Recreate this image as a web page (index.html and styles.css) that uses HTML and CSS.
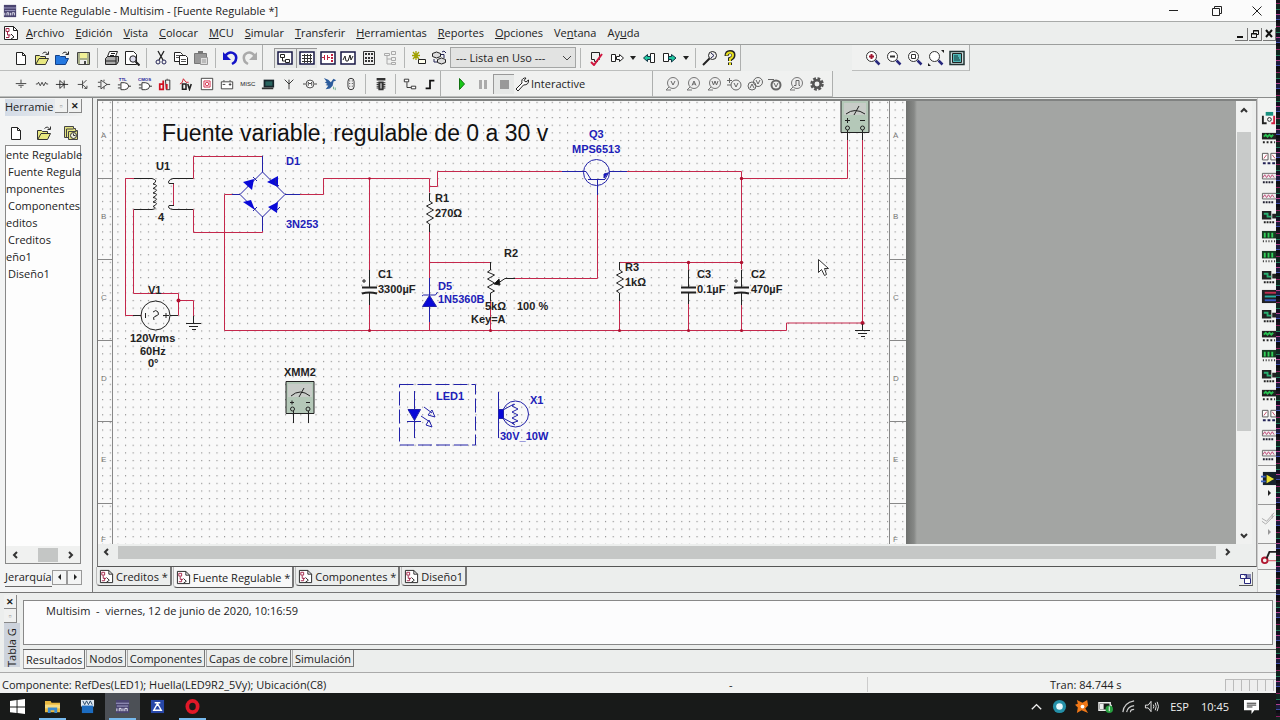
FILE: index.html
```html
<!DOCTYPE html>
<html lang="es">
<head>
    <meta charset="UTF-8">
    <meta name="viewport" content="width=device-width, initial-scale=1.0">
    <title>Fuente Regulable - Multisim</title>
    <link rel="stylesheet" href="styles.css">
</head>
<body>
    <!-- icon sprites -->
    <svg class="sprites" aria-hidden="true">
        <symbol id="app" viewBox="0 0 16 16"><path fill="#4a4470" d="M1 1h14v14H1z"/><path stroke="#a9a6cc" fill="none" d="M1 4.500h14M2 7.500h12"/><path stroke="#efeffa" fill="none" d="M2 13v-3M4.500 13v-3h2v3M8.500 13v-3M10.500 13v-3h2.500v3"/></symbol>
        <symbol id="doc" viewBox="0 0 16 16"><path fill="#fff" stroke="#222" d="M1.500 1.500h9l4 4v9h-13z"/><path fill="none" stroke="#222" d="M10.500 1.500v4h4"/><path fill="none" stroke="#a3264a" d="M3 3.500h3v3H3zM4.500 7v3h3M3 12.500h3v-3"/><path fill="none" stroke="#222" d="M8 9l3 3-3 2"/></symbol>
        <symbol id="new" viewBox="0 0 16 16"><path fill="#fff" stroke="#222" d="M3.500 2.500h6l3 3v9h-9z"/><path fill="none" stroke="#222" d="M9.500 2.500v3h3"/></symbol>
        <symbol id="open" viewBox="0 0 16 16"><path fill="#e8e880" stroke="#333" d="M1.500 14.500v-9h4l1 1h5v2h3l-3 6z"/><path fill="none" stroke="#333" d="M2 14l3-5.500h9M8.500 3.500q3-3 5 .5M14.500 1.500v3h-3"/></symbol>
        <symbol id="openblue" viewBox="0 0 16 16"><path fill="#2478e0" stroke="#123f86" d="M1.500 14.500v-9h4l1 1h5v2h3l-3 6z"/><path fill="none" stroke="#222" d="M8.500 3.500q3-3 5 .5M14.500 1.500v3h-3"/></symbol>
        <symbol id="save" viewBox="0 0 16 16"><path fill="#a9b08a" stroke="#444" d="M2.500 2.500h12v12h-11l-1-1z"/><path fill="#f0f096" d="M5 3h7v5H5z"/><path fill="#eee" d="M5 10h7v4H5z"/><path fill="#444" d="M9 11h2v3H9z"/></symbol>
        <symbol id="print" viewBox="0 0 16 16"><path fill="#fff" stroke="#222" d="M5.500 1.500h8l-2 5h-8z"/><path fill="#aaa" stroke="#222" d="M1.500 8.500l2-2h11v5l-2 3h-11z"/><path stroke="#222" fill="none" d="M1 11h11M7 3.500h4M6 5.500h4M12 7v7"/></symbol>
        <symbol id="preview" viewBox="0 0 16 16"><path fill="#fff" stroke="#222" d="M1.500 1.500h8l3 3v10h-11z"/><circle cx="9" cy="9" r="3.200" fill="#dde" stroke="#222"/><path stroke="#222" stroke-width="2" d="M11.500 11.500l4 4"/></symbol>
        <symbol id="cut" viewBox="0 0 16 16"><path stroke="#222" stroke-width="1.300" fill="none" d="M5 1l5 9M11 1l-5 9"/><circle cx="5" cy="12" r="2" fill="none" stroke="#225"/><circle cx="11" cy="12" r="2" fill="none" stroke="#225"/></symbol>
        <symbol id="copy" viewBox="0 0 16 16"><path fill="#fff" stroke="#222" d="M1.500 2.500h6l2 2v7h-8z"/><path fill="#fff" stroke="#222" d="M6.500 5.500h6l2 2v7h-8z"/><path stroke="#555" d="M3 5.500h4M3 7.500h3M8 9.500h5M8 11.500h5"/></symbol>
        <symbol id="paste" viewBox="0 0 16 16"><path fill="#999" stroke="#777" d="M1.500 3.500h12v10h-12z"/><path fill="#777" d="M5 1h5v3H5z"/><path fill="#ddd" stroke="#999" d="M7.500 7.500h7v7h-7z"/><path stroke="#999" d="M9 10h4M9 12h4"/></symbol>
        <symbol id="undo" viewBox="0 0 16 16"><path fill="none" stroke="#1414c8" stroke-width="2.500" d="M3 6q4-5 8-3t3 6q0 3-4 5"/><path fill="#1414c8" d="M1 2v8h8z"/></symbol>
        <symbol id="redo" viewBox="0 0 16 16"><path fill="none" stroke="#aaa" stroke-width="2.500" d="M13 6q-4-5-8-3t-3 6q0 3 4 5"/><path fill="#aaa" d="M15 2v8H7z"/></symbol>
        <symbol id="hier" viewBox="0 0 16 16"><path fill="#fff" stroke="#171746" stroke-width="1.500" d="M1 2h14v12H1z"/><path fill="#fff" stroke="#222" d="M3.500 4.500h4v3h-4zM8.500 9.500h4v3h-4zM5.500 8v3H8"/></symbol>
        <symbol id="grid" viewBox="0 0 16 16"><path fill="#fff" stroke="#171746" stroke-width="1.500" d="M1 2h14v12H1z"/><path stroke="#333" fill="none" d="M3 5.500h10M3 8.500h10M3 11.500h10M5.500 4v9M8.500 4v9M11.500 4v9"/></symbol>
        <symbol id="cap" viewBox="0 0 16 16"><path fill="#fff" stroke="#171746" stroke-width="1.500" d="M1 2h14v12H1z"/><path stroke="#c02040" fill="none" d="M2 7.500h2M4.500 5v5M7.500 5v5M8 7.500h2"/><path stroke="#c02040" stroke-dasharray="2 1" stroke-width="2" d="M12 4v9"/></symbol>
        <symbol id="graph" viewBox="0 0 16 16"><path fill="#fff" stroke="#171746" stroke-width="1.500" d="M1 2h14v12H1z"/><path stroke="#222" fill="none" d="M3 10l2-4 1 5h2l2-6 1 5 2-4"/></symbol>
        <symbol id="calc" viewBox="0 0 16 16"><path fill="#eee" stroke="#333" d="M2.500 1.500h11v13h-11z"/><path stroke="#333" stroke-width="2" stroke-dasharray="2 1" d="M4 4h9M4 8h9M4 11h9"/></symbol>
        <symbol id="tree" viewBox="0 0 16 16"><path fill="none" stroke="#aaa" d="M2.500 3.500h5v2h-5zM9.500 1.500h4v3h-4zM5 6v8h4M5 9h4M9.500 7.500h4v3h-4zM9.500 12.500h4v2h-4z"/></symbol>
        <symbol id="spark" viewBox="0 0 16 16"><path stroke="#a0a000" stroke-width="1.300" d="M5 1v9M1 5.500h8M2 2l6 7M8 2L2 9"/><path fill="#ffe" stroke="#222" d="M7.500 9.500h7v4h-7z"/></symbol>
        <symbol id="db" viewBox="0 0 16 16"><path fill="#ddd" stroke="#222" d="M1.500 3.500q4-3 8 0v3q-4 3-8 0zM6.500 9.500q4-3 8 0v3q-4 3-8 0z"/><path fill="none" stroke="#225" d="M3 9v3h3M10 4.500h3V8M11 2l2-1 2 2"/></symbol>
        <symbol id="erc" viewBox="0 0 16 16"><path fill="none" stroke="#222" d="M3.500 2.500h8v7h-2v2h-3v-2h-3z"/><path fill="none" stroke="#d01840" stroke-width="2" d="M3 12l3 3 8-11"/></symbol>
        <symbol id="fwd" viewBox="0 0 16 16"><path fill="#fff" stroke="#222" d="M2.500 4.500h4v7h-4z"/><path fill="#fff" stroke="#222" d="M7.500 6.500h3v-2l4 3.500-4 3.500v-2h-3z"/></symbol>
        <symbol id="back" viewBox="0 0 16 16"><path fill="#fff" stroke="#222" d="M9.500 3.500h4v9h-4z"/><path fill="#20c8a0" stroke="#134" d="M9.500 6.500h-3v-2L2.500 8l4 3.500v-2h3z"/></symbol>
        <symbol id="fwdg" viewBox="0 0 16 16"><path fill="#fff" stroke="#222" d="M1.500 3.500h5v8h-5z"/><path fill="#20c8a0" stroke="#134" d="M6.500 6.500h3v-2L14 8l-4.500 4v-2.500h-3z"/></symbol>
        <symbol id="find" viewBox="0 0 16 16"><circle cx="10.500" cy="5.500" r="4" fill="#eee" stroke="#222"/><path stroke="#222" stroke-width="2" d="M7.500 8.500L1 15"/><path fill="none" stroke="#225" d="M9 3l3 2.500L9 8"/></symbol>
        <symbol id="help" viewBox="0 0 16 16"><path fill="none" stroke="#222" stroke-width="4" d="M4.500 6q0-4 3.500-4t3.500 3T8 9v2M8 12.500v2.500"/><path fill="none" stroke="#e8e020" stroke-width="2" d="M4.500 5.500Q5 2.500 8 2.500T11 5 8 9v2M8 12.500V15"/></symbol>
        <symbol id="lens" viewBox="0 0 16 16"><circle cx="6.500" cy="6.500" r="5" fill="#fff" stroke="#333"/><path stroke="#28287c" stroke-width="2.500" d="M10.500 10.500l4 4"/></symbol>
        <symbol id="full" viewBox="0 0 16 16"><path fill="#cdd" stroke="#233" stroke-width="1.500" d="M1 1.500h14v13H1z"/><path fill="#50b8b8" stroke="#222" d="M3.500 3.500h9v9h-9z"/><path stroke="#133" d="M5 6h4M5 8h5M5 10h6"/></symbol>

        <symbol id="src" viewBox="0 0 16 16"><path stroke="#333" fill="none" d="M8 3v4M2 7.500h12M5 9.500h6M7 11.500h2"/></symbol>
        <symbol id="res" viewBox="0 0 16 16"><path stroke="#333" fill="none" d="M1 8h2l1-2 2 4 2-4 2 4 2-4 1 2h2"/></symbol>
        <symbol id="dio" viewBox="0 0 16 16"><path stroke="#222" fill="none" d="M1 8.500h14M5.500 4v9l5-4.500zM10.500 4v9"/></symbol>
        <symbol id="trn" viewBox="0 0 16 16"><path stroke="#333" fill="none" d="M2 8.500h5M7.500 4v9M12 3.500L8 7.500M8 9l4 4M9.500 13h3v-3"/></symbol>
        <symbol id="amp" viewBox="0 0 16 16"><path stroke="#333" fill="none" d="M4.500 3.500v10l7-5zM1 6h3M1 11h3M11 8.500h4M8 3v2M8 11v3"/></symbol>
        <symbol id="gate" viewBox="0 0 16 16"><path stroke="#222" fill="#fff" d="M4.500 6.500h4q4 0 5 4-1 4-5 4h-4zM1 9h3M1 12.500h3M13 10.500h3"/></symbol>
        <symbol id="dig" viewBox="0 0 16 16"><path stroke="#222" fill="none" d="M8.500 3.500h5v11h-4zM10.500 2v1"/><path stroke="#d01020" stroke-width="2" fill="none" d="M2 8h4v6H2zM6 4v5M10 8v6"/></symbol>
        <symbol id="mix" viewBox="0 0 16 16"><path stroke="#d01020" fill="none" d="M1 8q3 0 4-6l3 4h3"/><path stroke="#222" stroke-width="1.800" fill="none" d="M4 8h4v6H4zM10 8l2 6 2-6"/></symbol>
        <symbol id="ind" viewBox="0 0 16 16"><path stroke="#333" fill="#fff" d="M1.500 1.500h13v13h-13z"/><path stroke="#d02040" fill="none" d="M4.500 4.500h7v7h-7z"/><circle cx="8" cy="8" r="2" fill="none" stroke="#d02040"/></symbol>
        <symbol id="pwr" viewBox="0 0 16 16"><path stroke="#333" fill="#fff" d="M1.500 5.500h13v8h-13zM4.500 5V3.500M11.500 5V3.500"/><path stroke="#333" d="M3 8.500h3M10 8.500h3M11.500 7v3"/></symbol>
        <symbol id="per" viewBox="0 0 16 16"><path fill="#17252b" d="M3 3h12v9H3z"/><path fill="#29645f" d="M5 5h8v5H5z"/><path fill="#333" d="M1 12h13v2H1z"/></symbol>
        <symbol id="ant" viewBox="0 0 16 16"><path stroke="#222" fill="none" d="M3 3l5 5 5-5M8 3v11"/></symbol>
        <symbol id="mot" viewBox="0 0 16 16"><circle cx="8" cy="8" r="4.500" fill="#fff" stroke="#333"/><path stroke="#333" fill="none" d="M0 8h3M13 8h3M6 10V6l2 2 2-2v4"/></symbol>
        <symbol id="bird" viewBox="0 0 16 16"><path fill="#2c5c9c" d="M1 1l5 2 3 3 3-4 2 1 1 1-3 1-1 5-3 3-5 1 3-4-3-1 2-1-3-2 2-1z"/><path stroke="#6a8" d="M12 11v3M14 12v3"/></symbol>
        <symbol id="con" viewBox="0 0 16 16"><rect x="4.500" y="1.500" width="7" height="13" rx="3.500" fill="#eee" stroke="#222"/><path stroke="#222" stroke-dasharray="1 2" d="M6.500 4v9M9.500 4v9"/></symbol>
        <symbol id="mcu" viewBox="0 0 16 16"><path fill="#333" d="M3 1h10v3H3zM5 5h6v10H5z"/><path stroke="#333" stroke-dasharray="1 1" stroke-width="10" d="M8 6v8"/><path fill="#aaa" d="M7 7h2v6H7z"/></symbol>
        <symbol id="blk" viewBox="0 0 16 16"><path fill="#fff" stroke="#222" d="M1.500 2.500h5v3h-5zM9.500 10.500h5v3h-5z"/><path fill="none" stroke="#222" d="M4.500 6v6H9"/></symbol>
        <symbol id="bus" viewBox="0 0 16 16"><path fill="none" stroke="#111" stroke-width="2" d="M3 13h5V4h5"/></symbol>
        <symbol id="wrench" viewBox="0 0 16 16"><path fill="#fff" stroke="#222" d="M2 13l6-6Q7 3 10.500 2H12L10 4.500l2 1.500 2.500-2q.5 5-5 5L4 15z"/></symbol>
        <symbol id="probe" viewBox="0 0 16 16"><circle cx="9" cy="7" r="5.500" fill="#eee" stroke="#777"/><path fill="none" stroke="#777" d="M5 11l-3 3h5"/></symbol>
        <symbol id="gear" viewBox="0 0 16 16"><circle cx="8" cy="8" r="5" fill="none" stroke="#555" stroke-width="3.500" stroke-dasharray="2.500 1.400"/><circle cx="8" cy="8" r="3.700" fill="none" stroke="#555" stroke-width="2.500"/></symbol>
        <symbol id="recent" viewBox="0 0 16 16"><path fill="#e4e480" stroke="#444" d="M1.500 12.500v-11h9v2h2v2h2v9h-9v-2z"/><path fill="none" stroke="#444" d="M3.500 12v-8h7M5.500 14V6.500h8"/><circle cx="10.500" cy="10.500" r="3" fill="#eed" stroke="#333"/><path stroke="#333" fill="none" d="M10.500 8.500v2h2"/></symbol>

        <!-- instruments -->
        <symbol id="mm" viewBox="0 0 16 16"><path fill="#1a9080" d="M5 1h8v4H5z"/><path fill="none" stroke="#222" stroke-width="2" d="M2 5v8h4"/><path fill="none" stroke="#d02040" stroke-width="2" d="M14 5v8h-3"/><circle cx="9" cy="9" r="2" fill="none" stroke="#222"/></symbol>
        <symbol id="scope" viewBox="0 0 16 16"><path fill="#222" d="M1 2h15v7H1z"/><path fill="none" stroke="#28c050" stroke-width="2" d="M3 6l2-2 2 2 2-2 2 2 2-2"/><path stroke="#222" stroke-width="2" stroke-dasharray="2 2" d="M2 12h13"/></symbol>
        <symbol id="digits" viewBox="0 0 16 16"><path fill="#173a22" d="M1 1h15v8H1z"/><path stroke="#30d058" stroke-width="2" d="M4 3v5M8 3v5M12 3v5"/><path stroke="#222" stroke-width="2" stroke-dasharray="1 2" d="M2 12h13"/></symbol>
        <symbol id="half" viewBox="0 0 16 16"><path fill="#222" d="M1 1h10v9H1zM12 4h4v5h-4z"/><path fill="none" stroke="#28b070" stroke-width="2" d="M3 4h4v3h4"/><path stroke="#222" stroke-width="2" stroke-dasharray="2 1" d="M3 13h12"/></symbol>
        <symbol id="gen" viewBox="0 0 16 16"><path fill="#fff" stroke="#555" d="M1.500 2.500h6v7h-6zM10.500 2.500h6v7h-6z"/><path stroke="#c04860" fill="none" d="M3 8l3-4M12 4l3 4"/><path stroke="#225" stroke-width="2" stroke-dasharray="3 2" d="M2 13h13"/></symbol>
        <symbol id="wave" viewBox="0 0 16 16"><path fill="#eee" stroke="#666" d="M1.500 2.500h15v6h-15z"/><path fill="none" stroke="#c04878" d="M2 7l2-3 2 3 2-3 2 3 2-3 2 3"/><path stroke="#223" stroke-width="2" stroke-dasharray="2 1" d="M2 12h11"/></symbol>
        <symbol id="logic" viewBox="0 0 16 16"><path fill="#222" d="M1 1h15v14H1z"/><path stroke="#c03050" stroke-width="2" d="M4 4h12"/><path stroke="#28b0a0" stroke-width="2" d="M4 8h12"/><path stroke="#3858c0" stroke-width="2" d="M4 12h12"/></symbol>
        <symbol id="lv" viewBox="0 0 16 16"><path fill="#17222b" d="M2 1h14v14H2z"/><path fill="#e8e030" d="M6 4v9l8-4.500z"/><path stroke="#3a62c0" stroke-width="2" d="M0 6h5M0 11h5"/></symbol>
        <symbol id="elvis" viewBox="0 0 16 16"><path fill="none" stroke="#aaa" d="M1 12l4 3 9-9M1 9l5 3 8-9M12 4v5"/></symbol>
        <symbol id="clamp" viewBox="0 0 16 16"><circle cx="4" cy="12" r="3" fill="none" stroke="#b01830" stroke-width="2"/><path stroke="#222" stroke-width="2" fill="none" d="M6 10l3-7h7"/><path stroke="#d04050" d="M7 12.500h9"/></symbol>
    </svg>

    <div class="desktop">
        <header class="titlebar">
            <svg class="icon-sm"><use href="#app"/></svg>
            <span class="title">Fuente Regulable - Multisim - [Fuente Regulable *]</span>
            <div class="window-buttons">
                <button aria-label="Minimizar"><svg viewBox="0 0 10 10"><path d="M0 4.500h9"/></svg></button>
                <button aria-label="Restaurar"><svg viewBox="0 0 10 10"><path d="M.5 2.500h7v7h-7zM2.500 2V.5h7v7H8"/></svg></button>
                <button aria-label="Cerrar"><svg viewBox="0 0 10 10"><path d="M.5.5l9 9M9.500.5l-9 9"/></svg></button>
            </div>
        </header>

        <nav class="menubar">
            <svg class="menu-doc"><use href="#doc"/></svg>
            <a href="#"><u>A</u>rchivo</a>
            <a href="#"><u>E</u>dición</a>
            <a href="#"><u>V</u>ista</a>
            <a href="#"><u>C</u>olocar</a>
            <a href="#"><u>M</u>CU</a>
            <a href="#"><u>S</u>imular</a>
            <a href="#"><u>T</u>ransferir</a>
            <a href="#"><u>H</u>erramientas</a>
            <a href="#"><u>R</u>eportes</a>
            <a href="#"><u>O</u>pciones</a>
            <a href="#">Ve<u>n</u>tana</a>
            <a href="#">Ay<u>u</u>da</a>
            <div class="mdi-buttons">
                <button aria-label="Minimizar documento"><svg viewBox="0 0 10 10"><path d="M1 8h6"/></svg></button>
                <button aria-label="Restaurar documento"><svg viewBox="0 0 10 10"><path class="thin" d="M1.500 4.500h5v4h-5zM3.500 4V1.500h5v4H7M1 5h6M3 2h6"/></svg></button>
                <button aria-label="Cerrar documento"><svg viewBox="0 0 10 10"><path d="M2 1l6 7M8 1L2 8"/></svg></button>
            </div>
        </nav>

        <div class="toolbar-row">
            <div class="toolbar standard">
                <div class="group g4">
                    <button title="Nuevo"><svg><use href="#new"/></svg></button>
                    <button title="Abrir"><svg><use href="#open"/></svg></button>
                    <button title="Abrir muestras"><svg><use href="#openblue"/></svg></button>
                    <button title="Guardar"><svg><use href="#save"/></svg></button>
                </div>
                <div class="group g2">
                    <button title="Imprimir"><svg><use href="#print"/></svg></button>
                    <button title="Vista previa"><svg><use href="#preview"/></svg></button>
                </div>
                <div class="group g3">
                    <button title="Cortar"><svg><use href="#cut"/></svg></button>
                    <button title="Copiar"><svg><use href="#copy"/></svg></button>
                    <button title="Pegar"><svg><use href="#paste"/></svg></button>
                </div>
                <div class="group g2">
                    <button title="Deshacer"><svg><use href="#undo"/></svg></button>
                    <button title="Rehacer"><svg><use href="#redo"/></svg></button>
                </div>
            </div>
            <div class="toolbar">
                <div class="group g6">
                    <button class="on" title="Jerarquía"><svg><use href="#hier"/></svg></button>
                    <button class="on" title="Hoja"><svg><use href="#grid"/></svg></button>
                    <button title="Netlist"><svg><use href="#cap"/></svg></button>
                    <button title="Gráficos"><svg><use href="#graph"/></svg></button>
                    <button title="Postprocesador"><svg><use href="#calc"/></svg></button>
                    <button title="Padre"><svg><use href="#tree"/></svg></button>
                </div>
                <div class="group in-use">
                    <button title="Asistente"><svg><use href="#spark"/></svg></button>
                    <button title="Base de datos"><svg><use href="#db"/></svg></button>
                    <div class="combo">
                        <select aria-label="Lista en Uso"><option>--- Lista en Uso ---</option></select>
                        <svg viewBox="0 0 10 10"><path d="M1 3l4 4 4-4"/></svg>
                    </div>
                </div>
                <div class="group transfer">
                    <button title="ERC"><svg><use href="#erc"/></svg></button>
                    <button title="Transferir"><svg><use href="#fwd"/></svg></button>
                    <button class="drop" title="Más"><svg viewBox="0 0 10 10"><path d="M2 3h6L5 7z"/></svg></button>
                    <button title="Anotar atrás"><svg><use href="#back"/></svg></button>
                    <button title="Anotar"><svg><use href="#fwdg"/></svg></button>
                    <button class="drop" title="Más"><svg viewBox="0 0 10 10"><path d="M2 3h6L5 7z"/></svg></button>
                </div>
                <div class="group g2">
                    <button title="Buscar"><svg><use href="#find"/></svg></button>
                    <button title="Ayuda"><svg><use href="#help"/></svg></button>
                </div>
            </div>
            <div class="toolbar zoom-bar">
                <div class="group g5">
                    <button title="Acercar"><svg viewBox="0 0 16 16"><use href="#lens"/><path stroke="#a01830" stroke-width="2" d="M6.500 4v5M4 6.500h5"/></svg></button>
                    <button title="Alejar"><svg viewBox="0 0 16 16"><use href="#lens"/><path stroke="#333" stroke-width="2" d="M4 6.500h5"/></svg></button>
                    <button title="Zoom área"><svg viewBox="0 0 16 16"><use href="#lens"/><path stroke="#333" fill="none" d="M4.500 4.500h4v4h-4z"/></svg></button>
                    <button title="Ajustar"><svg viewBox="0 0 16 16"><use href="#lens"/><path fill="#222" d="M13 0h3v3zM0 13v3h3z"/></svg></button>
                    <button title="Pantalla completa"><svg><use href="#full"/></svg></button>
                </div>
            </div>
        </div>

        <div class="toolbar-row">
            <div class="toolbar second">
                <div class="group g17">
                    <button title="Fuentes"><svg><use href="#src"/></svg></button>
                    <button title="Básicos"><svg><use href="#res"/></svg></button>
                    <button title="Diodos"><svg><use href="#dio"/></svg></button>
                    <button title="Transistores"><svg><use href="#trn"/></svg></button>
                    <button title="Analógicos"><svg><use href="#amp"/></svg></button>
                    <button title="TTL"><svg viewBox="0 0 16 16"><use href="#gate"/><text class="chip" x="2" y="5">TTL</text></svg></button>
                    <button title="CMOS"><svg viewBox="0 0 16 16"><use href="#gate"/><text class="chip" x="0" y="5">CMOS</text></svg></button>
                    <button title="Digitales"><svg><use href="#dig"/></svg></button>
                    <button title="Mixtos"><svg><use href="#mix"/></svg></button>
                    <button title="Indicadores"><svg><use href="#ind"/></svg></button>
                    <button title="Potencia"><svg><use href="#pwr"/></svg></button>
                    <button class="misc" title="Miscelánea">MISC</button>
                    <button title="Periféricos"><svg><use href="#per"/></svg></button>
                    <button title="RF"><svg><use href="#ant"/></svg></button>
                    <button title="Electromecánicos"><svg><use href="#mot"/></svg></button>
                    <button title="NI"><svg><use href="#bird"/></svg></button>
                    <button title="Conectores"><svg><use href="#con"/></svg></button>
                </div>
                <div class="group g1">
                    <button title="MCU"><svg><use href="#mcu"/></svg></button>
                </div>
                <div class="group g2">
                    <button title="Bloque"><svg><use href="#blk"/></svg></button>
                    <button title="Bus"><svg><use href="#bus"/></svg></button>
                </div>
            </div>
            <div class="toolbar simulate">
                <button title="Ejecutar"><svg viewBox="0 0 16 16"><path fill="#18c818" stroke="#107010" d="M5.500 2.500v11l5-5.500z"/></svg></button>
                <button title="Pausa"><svg viewBox="0 0 16 16"><path fill="#aaa" d="M4 4h3v9H4zM9 4h3v9H9z"/></svg></button>
                <button class="on" title="Detener"><svg viewBox="0 0 16 16"><path fill="#999" d="M4 4h9v9H4z"/></svg></button>
                <button class="interactive"><svg><use href="#wrench"/></svg>Interactive</button>
            </div>
            <div class="toolbar probes">
                <div class="group g8">
                    <button title="Voltaje"><svg viewBox="0 0 16 16"><use href="#probe"/><path class="mark" d="M7 5l2 4 2-4"/></svg></button>
                    <button title="Corriente"><svg viewBox="0 0 16 16"><use href="#probe"/><path class="mark" d="M7 9.500L9 5l2 4.500M8 8h2"/></svg></button>
                    <button title="Potencia"><svg viewBox="0 0 16 16"><use href="#probe"/><path class="mark" d="M6 5l1.500 4L9 5l1.500 4L12 5"/></svg></button>
                    <button title="Diferencial"><svg viewBox="0 0 16 16"><circle class="mark" cx="10" cy="9" r="5"/><path class="mark" d="M8 7l2 4 2-4M1 4.500h5M3.500 2v5M1 9h4"/></svg></button>
                    <button title="Voltaje y corriente"><svg viewBox="0 0 16 16"><circle class="mark" cx="5" cy="10" r="4"/><circle class="mark" cx="11" cy="6" r="4.500"/><path class="mark" d="M9 4l2 4 2-4M3 12l2-4 2 4"/></svg></button>
                    <button title="Referencia"><svg viewBox="0 0 16 16"><path class="mark" d="M1 3.500h6"/><circle class="mark heavy" cx="9" cy="9" r="4.500"/><path class="mark" d="M7 7l2 4 2-4"/></svg></button>
                    <button title="Digital"><svg viewBox="0 0 16 16"><use href="#probe"/><path class="mark" d="M6 9.500h2v-5h3v5h1"/></svg></button>
                    <button title="Configurar"><svg><use href="#gear"/></svg></button>
                </div>
            </div>
        </div>

        <div class="workspace">
            <aside class="toolbox">
                <div class="pane-title">
                    <span>Herramie</span>
                    <button class="mini dim" aria-label="Fijar">▫</button>
                    <button class="mini" aria-label="Cerrar panel">✕</button>
                </div>
                <div class="pane-tools">
                    <button title="Nuevo"><svg><use href="#new"/></svg></button>
                    <button title="Abrir"><svg><use href="#open"/></svg></button>
                    <button title="Recientes"><svg><use href="#recent"/></svg></button>
                </div>
                <div class="tree">
                    <ul>
                        <li>ente Regulable</li>
                        <li class="child">Fuente Regula</li>
                        <li>mponentes</li>
                        <li class="child">Componentes</li>
                        <li>editos</li>
                        <li class="child">Creditos</li>
                        <li>eño1</li>
                        <li class="child">Diseño1</li>
                    </ul>
                    <div class="tree-scroll">
                        <svg viewBox="0 0 8 8"><path d="M6 1L3 4l3 3"/></svg>
                        <i></i>
                        <svg viewBox="0 0 8 8"><path d="M2 1l3 3-3 3"/></svg>
                    </div>
                </div>
                <div class="pane-tabs">
                    <button class="pane-tab">Jerarquía</button>
                    <button class="arrow" aria-label="Anterior"><svg viewBox="0 0 10 10"><path d="M6 2v6L3 5z"/></svg></button>
                    <button class="arrow" aria-label="Siguiente"><svg viewBox="0 0 10 10"><path d="M4 2v6l3-3z"/></svg></button>
                </div>
            </aside>

            <main class="document">
                <div class="frame">
                    <div class="canvas">
                        <svg class="sheet" width="808" height="443" viewBox="98 101 808 443">
                            <defs>
                                <pattern id="dots" x="125" y="178" width="7.620" height="7.620" patternUnits="userSpaceOnUse"><path fill="#8a8a8a" d="M0 0h1.100v1.100H0z"/></pattern>
                            </defs>
                            <path fill="#f9f9f9" d="M98 101h808v443H98z"/>
                            <path fill="url(#dots)" d="M98 101h808v443H98z"/>

                            <g class="zones">
                                <path d="M112.500 101v443M889.500 101v443M98 178.500h14M98 259.500h14M98 340.500h14M98 421.500h14M98 503.500h14M889 178.500h17M889 259.500h17M889 340.500h17M889 421.500h17M889 503.500h17"/>
                                <text x="101" y="138">A</text><text x="101" y="219">B</text><text x="101" y="300">C</text><text x="101" y="381">D</text><text x="101" y="462">E</text><text x="101" y="542">F</text>
                                <text x="893" y="138">A</text><text x="893" y="219">B</text><text x="893" y="300">C</text><text x="893" y="381">D</text><text x="893" y="462">E</text><text x="893" y="542">F</text>
                            </g>

                            <!-- wires -->
                            <g class="wire">
                                <path d="M140 178.500h-14.500v137h16M140 209.500h-6.500v84h45v22M178.500 300.500h15v16"/>
                                <path d="M186 178.500h7.500v-22h69v8M186 209.500h7.500v23h69v-8"/>
                                <path d="M232 194.500h-7.500v136h562v-7.500h76V140"/>
                                <path d="M300 194.500h23.500v-16h106v14M429.500 186.500h8v-15h134M429.500 225v54M369.500 178.500v93M369.500 300v31M429.500 320v11"/>
                                <path d="M429.500 262.500h61v6M490.500 300v31M512 278.500h85.500V194M627 171.500h114.500v98M741.500 178.500h106V140M741.500 262.500h-122v6M619.500 300v31M688.500 262.500v10M688.500 300v31M741.500 300v31"/>
                            </g>
                            <g fill="#b01030">
                                <circle cx="178.500" cy="300.500" r="2"/><circle cx="741.500" cy="178.500" r="1.700"/><circle cx="741.500" cy="262.500" r="1.700"/><circle cx="688.500" cy="262.500" r="1.700"/><circle cx="862.500" cy="323" r="2"/>
                                <circle cx="369.500" cy="178.500" r="1.300"/><circle cx="369.500" cy="330.500" r="1.500"/><circle cx="490.500" cy="330.500" r="1.500"/><circle cx="619.500" cy="330.500" r="1.500"/><circle cx="688.500" cy="330.500" r="1.500"/><circle cx="741.500" cy="330.500" r="1.500"/>
                            </g>

                            <!-- black parts -->
                            <g class="part">
                                <path d="M134 178.500h18q7 2 1 5.500q7 1 0 4.500q7 1 0 4.500q7 1 0 4.500q7 1 0 4.500q7 1 0 4.500q5 2-1 3h-18"/>
                                <path d="M193 178.500h-20q-6 2-4 5l5 0M193 209.500h-20q-6-1-4-4l5 0"/>
                                <path stroke="#c0284c" d="M173.500 184v21"/>
                                <circle cx="155.500" cy="315.500" r="14.500"/>
                                <path d="M133 315.500h8M170 315.500h8M145.500 313v5M163 315.500h6M166 313v5M153 312q3-3 5 0t-2 4-2 4"/>
                                <path d="M193.500 316v7M186 323.500h15M189 326.500h9M192 329.500h4"/>
                                <path d="M862.500 324v6M855 330.500h15M858 333.500h9M861 336.500h4"/>
                                <path d="M429.500 193v8l3 2-6 3 7 4-7 4 7 4-7 4 3 2v8M490.500 262v8l-3 2 7 3-7 4 7 4-7 4 7 4-4 2v8M619.500 262v8l3 2-6 3 7 4-7 4 7 4-7 4 3 2v8"/>
                                <path d="M515 278.500h-10l-6 4"/><path fill="#111" d="M494 284l5-5 1 6z"/>
                                <path d="M369.500 270v17M369.500 293v12M688.500 270v17M688.500 292v12M741.500 270v17M741.500 293v12M362 281h4M364 279v4M734 281h4M736 279v4"/>
                                <path class="plate" d="M362 287.500h15M362 293.500q7-2 15 0M681 287.500h15M681 292.500h15M734 287.500h15M734 293.500q7-2 15 0"/>
                            </g>

                            <!-- blue parts -->
                            <g class="part blue">
                                <path d="M262.500 164v8l22.500 22.500-22.500 22.500v14M262.500 172L240 194.500l22.500 22.500M232 194.500h8M285 194.500h15M262.500 156v10"/>
                                <path fill="#0808d8" stroke="none" d="M243 182l11-3-2 11zM267 182l11-6 0 11zM243 202l8-2 4 10zM268 207l10-5-1 11z"/>
                                <path d="M253 177l4 4M276 178l-1 5 4 3M253 211l4-4M276 211l4-4"/>
                                <circle cx="596.500" cy="172.500" r="13"/>
                                <path d="M562 171.500h24l5 8M609 171.500h18M588 179.500h17M597.500 179v16M605 179l4-7"/><path fill="#0808d8" d="M604 178v-4l4-1z"/>
                                <path d="M429.500 278v44M422 296l1.500-1h12l2-3"/><path fill="#0808d8" d="M429.500 295.500l7 11h-14z"/>
                                <path class="dash" d="M399.500 384.500h76v60.500h-76z"/>
                                <path d="M414.500 391v47M407 421.500h14M424 407l8 6M421 416l9 6M435 417l-7-2 4-5zM432 427l-6-2 3-5z"/><path fill="#0808d8" d="M408 409.500h12.500l-6 11z"/>
                                <path d="M498.500 392v46"/><circle cx="515.500" cy="414" r="13"/>
                                <path d="M503 410l11-6M503 418l11 6M515 404l-3 2 6 3-6 3 6 3-6 3 6 3-6 2 3 2"/><path fill="#0808d8" d="M498.500 409.500h5v9h-5z"/>
                            </g>

                            <!-- multimeters -->
                            <g class="meter">
                                <path fill="#b4c8b8" d="M286 381.500h28v32h-28z"/><path stroke="none" fill="#c8ccc8" d="M288 384h24v13h-24z"/>
                                <path d="M291 396q9-8 19 0M299 397l5-9M290 402.500h4M292 400.500v4M306 402.500h4M293.500 411v12M308.500 411v12"/>
                                <circle cx="292.500" cy="409" r="2"/><circle cx="308" cy="409" r="2"/>
                                <path fill="#b4c8b8" d="M841 100.500h28v32h-28z"/><path stroke="none" fill="#c8ccc8" d="M844 103h22v12h-22z"/>
                                <path d="M846 114q9-7 19 0M854 115l5-9M845 120.500h5M847.500 118v5M860 120.500h5M847.500 130v10M862.500 130v10"/>
                                <circle cx="847.500" cy="128" r="2"/><circle cx="862.500" cy="128" r="2"/>
                            </g>

                            <text class="heading" x="162" y="141">Fuente variable, regulable de 0 a 30 v</text>
                            <g class="label">
                                <text x="156" y="170">U1</text><text x="158" y="221">4</text><text x="148" y="294">V1</text>
                                <text x="130" y="342">120Vrms</text><text x="140" y="355">60Hz</text><text x="148" y="367">0°</text>
                                <text x="435" y="202">R1</text><text x="435" y="217">270Ω</text>
                                <text x="378" y="278">C1</text><text x="378" y="293">3300µF</text>
                                <text x="504" y="257">R2</text><text x="485" y="310">5kΩ</text><text x="517" y="310">100 %</text><text x="471" y="323">Key=A</text>
                                <text x="625" y="271">R3</text><text x="625" y="286">1kΩ</text>
                                <text x="697" y="278">C3</text><text x="697" y="293">0.1µF</text>
                                <text x="751" y="278">C2</text><text x="751" y="293">470µF</text>
                                <text x="284" y="376">XMM2</text>
                            </g>
                            <g class="label blue">
                                <text x="286" y="165">D1</text><text x="286" y="228">3N253</text>
                                <text x="589" y="138">Q3</text><text x="572" y="153">MPS6513</text>
                                <text x="438" y="290">D5</text><text x="438" y="303">1N5360B</text>
                                <text x="436" y="400">LED1</text><text x="530" y="404">X1</text><text x="500" y="440">30V_10W</text>
                            </g>
                            <path fill="#fff" stroke="#333" d="M818.500 259.500v13l3-3 3 6 2-1-2-6h4z"/>
                        </svg>
                        <div class="desk"></div>
                    </div>
                    <div class="vscroll">
                        <svg viewBox="0 0 8 8"><path d="M1 6l3-3 3 3"/></svg>
                        <div class="track"><i></i></div>
                        <svg viewBox="0 0 8 8"><path d="M1 2l3 3 3-3"/></svg>
                    </div>
                    <div class="hscroll">
                        <svg viewBox="0 0 8 8"><path d="M6 1L3 4l3 3"/></svg>
                        <i></i>
                        <svg viewBox="0 0 8 8"><path d="M2 1l3 3-3 3"/></svg>
                    </div>
                </div>
                <div class="doc-tabs">
                    <button><svg><use href="#doc"/></svg>Creditos *</button>
                    <button class="active"><svg><use href="#doc"/></svg>Fuente Regulable *</button>
                    <button><svg><use href="#doc"/></svg>Componentes *</button>
                    <button><svg><use href="#doc"/></svg>Diseño1</button>
                    <button class="cascade" aria-label="Ventanas"><svg viewBox="0 0 12 12"><path fill="#fff" stroke="#28287c" d="M.5 1.500h6v4h-6zM4.500 5.500h6v5h-6zM4 2h7M5 4h6"/></svg></button>
                </div>
            </main>

            <aside class="instruments">
                <div class="inst-list">
                    <button title="Multímetro"><svg><use href="#mm"/></svg></button>
                    <button title="Generador"><svg><use href="#scope"/></svg></button>
                    <button title="Vatímetro"><svg><use href="#gen"/></svg></button>
                    <button title="Osciloscopio"><svg><use href="#wave"/></svg></button>
                    <button title="Osciloscopio 4"><svg><use href="#wave"/></svg></button>
                    <button title="Bode"><svg><use href="#half"/></svg></button>
                    <button title="Frecuencia"><svg><use href="#digits"/></svg></button>
                    <button title="Palabras"><svg><use href="#digits"/></svg></button>
                    <button title="Convertidor"><svg><use href="#half"/></svg></button>
                    <button title="Analizador lógico"><svg><use href="#logic"/></svg></button>
                    <button title="Analizador IV"><svg><use href="#half"/></svg></button>
                    <button title="Distorsión"><svg><use href="#scope"/></svg></button>
                    <button title="Espectro"><svg><use href="#digits"/></svg></button>
                    <button title="Redes"><svg><use href="#half"/></svg></button>
                    <button title="Agilent gen."><svg><use href="#scope"/></svg></button>
                    <button title="Agilent mult."><svg><use href="#gen"/></svg></button>
                    <button title="Agilent osc."><svg><use href="#wave"/></svg></button>
                    <button title="Tektronix"><svg><use href="#wave"/></svg></button>
                </div>
                <div class="inst-extra">
                    <button title="LabVIEW"><svg><use href="#lv"/></svg></button>
                    <button class="drop" title="Más"><svg viewBox="0 0 10 10"><path d="M4 2v6l3-3z"/></svg></button>
                </div>
                <div class="inst-extra dim">
                    <button title="ELVISmx"><svg><use href="#elvis"/></svg></button>
                    <button class="drop" title="Más"><svg viewBox="0 0 10 10"><path d="M4 2v6l3-3z"/></svg></button>
                </div>
                <div class="inst-extra last">
                    <button title="Sonda de corriente"><svg><use href="#clamp"/></svg></button>
                </div>
            </aside>
        </div>

        <section class="spreadsheet">
            <div class="side-title">
                <button class="mini" aria-label="Cerrar tabla">✕</button>
                <button class="mini dim" aria-label="Fijar tabla">▫</button>
                <span>Tabla G</span>
            </div>
            <div class="results">
                <div class="log">Multisim&nbsp; -&nbsp; viernes, 12 de junio de 2020, 10:16:59</div>
                <div class="log-tabs">
                    <button class="active">Resultados</button>
                    <button>Nodos</button>
                    <button>Componentes</button>
                    <button>Capas de cobre</button>
                    <button>Simulación</button>
                </div>
            </div>
        </section>

        <footer class="statusbar">
            <span class="hint">Componente: RefDes(LED1); Huella(LED9R2_5Vy); Ubicación(C8)</span>
            <span class="dash-cell">-</span>
            <span class="blank"></span>
            <span class="tran">Tran: 84.744 s</span>
            <span class="meter-cells"></span>
        </footer>

        <div class="taskbar">
            <button aria-label="Inicio"><svg viewBox="0 0 16 16"><path fill="#fff" d="M0 2l7-1v7H0zM8 1l8-1v8H8zM0 9h7v6l-7-1zM8 9h8v7l-8-1z"/></svg></button>
            <button class="open" aria-label="Explorador"><svg viewBox="0 0 16 16"><path fill="#e8b840" d="M0 2h6l1 2h9v10H0z"/><path fill="#f8dc80" d="M0 6h16v4H0z"/><path fill="#3c8cd0" d="M3 9h10v6h-3v-3H6v3H3z"/></svg></button>
            <button aria-label="Word"><svg viewBox="0 0 16 16"><path fill="#dfe8f2" d="M1 1h14v7H1z"/><path fill="#1c6cc0" d="M2 7h12v8H2z"/><path fill="none" stroke="#246" d="M3 2l2 4 2-4 2 4 2-4 2 4"/></svg></button>
            <button class="open current" aria-label="Multisim"><svg><use href="#app"/></svg></button>
            <button aria-label="Editor"><svg viewBox="0 0 16 16"><path fill="#2848a8" d="M1 1h14v14H1z"/><path fill="none" stroke="#fff" stroke-width="1.500" d="M5 4h6M8 5l-4 7h8z"/></svg></button>
            <button class="open" aria-label="Opera"><svg viewBox="0 0 16 16"><ellipse cx="8" cy="8" rx="5.500" ry="6" fill="none" stroke="#e01828" stroke-width="4"/></svg></button>
            <div class="tray">
                <svg viewBox="0 0 16 16"><path fill="none" stroke="#eee" stroke-width="1.500" d="M3 11l5-5 5 5"/></svg>
                <svg viewBox="0 0 16 16"><circle cx="8" cy="8" r="7" fill="#2490a8"/><circle cx="8" cy="8" r="3.500" fill="#e8f8fc"/></svg>
                <svg viewBox="0 0 16 16"><path fill="#f07818" d="M2 1l6 3 5-3 1 6-3 3 3 5-7-3-5 3 1-6-3-3 3-1z"/><circle cx="8" cy="8" r="2" fill="#fff"/></svg>
                <svg viewBox="0 0 16 16"><path fill="none" stroke="#eee" stroke-width="1.500" d="M1 4h12v8H1zM14 6v4"/><path fill="#eee" d="M2 5h4v6H2z"/><circle cx="12" cy="11" r="4" fill="#28a040"/><path stroke="#fff" d="M12 8v5"/></svg>
                <svg viewBox="0 0 16 16"><path fill="none" stroke="#ccc" stroke-width="1.300" d="M2 14Q3 4 14 2M6 14q1-6 8-7M10 14q0-3 4-3"/></svg>
                <svg viewBox="0 0 16 16"><path fill="none" stroke="#eee" d="M1.500 6.500h3l3-4v11l-3-4h-3zM10 6q1 2 0 4M12 4q2 4 0 8M14 3q3 5 0 10"/></svg>
                <span class="lang">ESP</span>
                <span class="clock">10:45</span>
                <svg viewBox="0 0 16 16"><path fill="#fff" d="M0 1h16v11h-5l-3 4v-4H0z"/><path stroke="#222" d="M3 4.500h10M3 6.500h10M3 8.500h6"/></svg>
            </div>
        </div>
    </div>
    <div class="edge"></div>
</body>
</html>
```
FILE: styles.css
```css
* {
    box-sizing: border-box;
}
body {
    margin: 0;
    display: flex;
    min-height: 100vh;
    background-color: #eceeed;
    font-family: "Open Sans", "Noto Sans", sans-serif;
    font-size: 11px;
    color: #222;
}
button {
    font: inherit;
    color: inherit;
    background: none;
    border: none;
    padding: 0;
    display: flex;
    align-items: center;
    justify-content: center;
    flex-shrink: 0;
    white-space: nowrap;
}
a {
    color: inherit;
    text-decoration: none;
}
svg {
    display: block;
    flex-shrink: 0;
}
.sprites {
    display: none;
}
.desktop {
    flex: 1;
    min-width: 0;
    display: flex;
    flex-direction: column;
}
/* coloured pixels along the right side */
.edge {
    width: 4px;
    background: repeating-linear-gradient(#16121c 0 3px, #8c1f5e 3px 4px, #10251f 4px 9px, #1e7a58 9px 10px, #130f20 10px 14px, #b0408c 14px 15px, #1c1c3c 15px 19px, #3c4ca8 19px 20px, #0d0d12 20px 23px);
}

/* title and menu */
.titlebar {
    display: flex;
    align-items: center;
    height: 22px;
    padding-left: 3px;
    background-color: #fbfbfb;
    border-bottom: 1px solid #a8aaa9;
}
.icon-sm {
    width: 14px;
    height: 14px;
    margin-right: 5px;
}
.title {
    flex: 1;
}
.window-buttons {
    display: flex;
}
.window-buttons button {
    width: 43px;
    height: 19px;
}
.window-buttons button:last-child {
    width: 38px;
}
.window-buttons svg {
    width: 10px;
    height: 10px;
    fill: none;
    stroke: #222;
}
.menubar {
    display: flex;
    align-items: center;
    gap: 11px;
    height: 23px;
    padding: 0 0 1px 3px;
    border-bottom: 1px solid #9c9e9d;
}
.menu-doc {
    width: 16px;
    height: 16px;
    margin-right: -4px;
}
.mdi-buttons {
    display: flex;
    gap: 1px;
    margin: 4px 0 0 auto;
}
.mdi-buttons button {
    width: 13px;
    height: 13px;
    border-right: 1px solid #777;
    border-bottom: 1px solid #777;
}
.mdi-buttons svg {
    width: 10px;
    height: 10px;
    fill: none;
    stroke: #111;
    stroke-width: 2;
}
.mdi-buttons .thin {
    stroke-width: 1;
}

/* toolbars */
.toolbar-row {
    display: flex;
    height: 26px;
}
.toolbar {
    display: flex;
    align-items: center;
    padding-left: 11px;
    background-color: #f0f1f0;
    border-right: 1px solid #adafae;
    border-bottom: 1px solid #bcbebd;
}
.toolbar button {
    height: 20px;
}
.toolbar svg {
    width: 16px;
    height: 16px;
}
.toolbar.standard {
    width: 263px;
}
.toolbar.second svg {
    width: 14px;
    height: 14px;
}
.group {
    display: flex;
    align-items: center;
}
.group + .group {
    border-left: 1px solid #b4b6b5;
    margin-left: 4px;
    padding-left: 4px;
}
.group button {
    flex: 1;
}
.g1 { width: 26px; }
.g2 { width: 45px; }
.g3 { width: 65px; }
.g4 { width: 82px; }
.g5 { width: 104px; }
.g6 { width: 126px; }
.g8 { width: 165px; }
.g17 { width: 350px; }
.on {
    border-left: 1px solid #999;
    border-top: 1px solid #999;
    background-color: #e6e8e7;
}
.in-use button {
    flex: none;
    width: 20px;
}
.combo {
    display: grid;
    align-items: center;
    margin-left: 1px;
}
.combo select {
    grid-area: 1 / 1;
    width: 126px;
    height: 21px;
    padding: 0 0 0 5px;
    appearance: none;
    font: inherit;
    color: inherit;
    background-color: #e2e3e2;
    border: 1px solid #a4a6a5;
    border-radius: 0;
}
.combo svg {
    grid-area: 1 / 1;
    justify-self: end;
    width: 10px;
    height: 10px;
    margin-right: 4px;
    fill: none;
    stroke: #444;
    pointer-events: none;
}
.transfer button {
    flex: none;
    width: 21px;
}
.transfer .drop {
    width: 11px;
}
.drop svg, .arrow svg {
    width: 10px;
    height: 10px;
    fill: currentColor;
}
.zoom-bar {
    margin-left: 111px;
    padding-right: 2px;
}
.chip {
    font-family: "Liberation Sans", sans-serif;
    font-size: 5px;
    font-weight: bold;
    fill: #1c1c96;
}
.misc {
    font-family: "Liberation Sans", sans-serif;
    font-size: 6px;
}
.simulate {
    width: 212px;
    padding-left: 10px;
}
.simulate button {
    width: 21px;
}
.simulate .interactive {
    width: auto;
    gap: 1px;
}
.probes {
    padding: 0 5px 0 9px;
}
.mark {
    fill: none;
    stroke: #666;
}
.heavy {
    stroke-width: 2;
}

/* workspace */
.workspace {
    flex: 1;
    display: flex;
    border-top: 1px solid #8a8c8b;
}
.toolbox {
    width: 93px;
    padding: 1px 10px 2px 5px;
    display: flex;
    flex-direction: column;
    background-color: #f3f4f4;
    border-right: 1px solid #777;
}
.pane-title {
    display: flex;
    gap: 1px;
    height: 17px;
    width: 77px;
    background: linear-gradient(90deg, #d3dbe6, #f0f1f0);
}
.pane-title span {
    flex: 1;
    white-space: nowrap;
}
.mini {
    width: 13px;
    height: 14px;
    font-size: 9px;
    font-weight: bold;
    background-color: #f0f1f0;
    border-right: 1px solid #888;
    border-bottom: 1px solid #888;
}
.dim {
    color: #999;
}
.pane-tools {
    display: flex;
    align-items: center;
    justify-content: space-between;
    height: 29px;
    padding: 4px 3px 0;
}
.pane-tools svg {
    width: 16px;
    height: 16px;
}
.tree {
    flex: 1;
    width: 76px;
    display: flex;
    flex-direction: column;
    justify-content: space-between;
    background-color: #fdfdfd;
    border: 1px solid #888;
}
.tree ul {
    list-style: none;
    margin: 0;
    padding: 0;
}
.tree li {
    line-height: 17px;
    white-space: nowrap;
}
.tree .child {
    padding-left: 2px;
}
.tree-scroll {
    display: flex;
    align-items: center;
    height: 17px;
    padding: 0 5px;
    background-color: #f0f1f0;
}
.tree-scroll svg, .vscroll svg, .hscroll svg {
    width: 8px;
    height: 8px;
    fill: none;
    stroke: #333;
    stroke-width: 2;
}
.tree-scroll i {
    width: 20px;
    height: 14px;
    margin: 0 9px 0 auto;
    background-color: #c4c6c5;
}
.pane-tabs {
    display: flex;
    height: 26px;
    align-items: center;
}
.pane-tab {
    width: 47px;
    height: 20px;
    justify-content: flex-start;
    border-bottom: 1px solid #666;
}
.arrow {
    width: 15px;
    height: 15px;
    border: 1px solid #999;
}
.document {
    flex: 1;
    min-width: 0;
    display: flex;
    flex-direction: column;
}
.frame {
    flex: 1;
    display: grid;
    grid-template-columns: 1fr 20px;
    grid-template-rows: 1fr 16px;
    margin: 1px 0 0 4px;
    padding-bottom: 6px;
    border-top: 2px solid #808281;
    border-left: 1px solid #777;
    border-right: 1px solid #999;
    border-bottom: 1px solid #555;
}
.canvas {
    display: flex;
    overflow: hidden;
}
.desk {
    flex: 1;
    background: linear-gradient(90deg, #6e706e, #868886 8px, #a3a5a3 11px);
}
.zones path {
    stroke: #888;
    fill: none;
}
.zones text {
    font: 8px "Liberation Sans", sans-serif;
    fill: #777;
}
.wire path {
    fill: none;
    stroke: #c4284c;
}
.part {
    fill: none;
    stroke: #222;
}
.part.blue {
    stroke: #2222a8;
}
.part .plate {
    stroke-width: 2;
}
.dash {
    stroke-dasharray: 14 4;
}
.meter {
    fill: none;
    stroke: #222;
}
.heading {
    font: 23px "Liberation Sans", sans-serif;
    fill: #111;
}
.label {
    font: bold 11px "Liberation Sans", sans-serif;
    fill: #222;
}
.label.blue {
    fill: #2020b8;
}
.vscroll {
    display: flex;
    flex-direction: column;
    align-items: center;
    width: 16px;
    padding: 5px 0 4px;
    gap: 4px;
    background-color: #f0f1f0;
}
.vscroll .track {
    flex: 1;
    width: 14px;
    padding: 14px 0 97px;
    display: flex;
}
.vscroll i {
    flex: 1;
    background-color: #c8cac9;
}
.hscroll {
    display: flex;
    align-items: center;
    gap: 8px;
    padding: 0 4px;
}
.hscroll i {
    flex: 1;
    height: 13px;
    background-color: #c5c7c6;
}
.doc-tabs {
    display: flex;
    gap: 1px;
    height: 25px;
    padding-left: 3px;
}
.doc-tabs button {
    height: 19px;
    padding: 0 2px;
    gap: 2px;
    border-right: 2px solid #777;
    border-bottom: 1px solid #555;
    border-left: 1px solid #bbb;
    border-radius: 0 0 2px 4px;
}
.doc-tabs svg {
    width: 15px;
    height: 15px;
}
.doc-tabs .active {
    height: 21px;
    background-color: #f8f8f8;
}
.doc-tabs .cascade {
    width: 14px;
    height: 14px;
    margin: 5px 4px 0 auto;
    padding: 0;
    border-width: 0 1px 1px 0;
    border-radius: 0;
}
.doc-tabs .cascade svg {
    width: 12px;
    height: 12px;
}
.instruments {
    width: 19px;
    padding-top: 11px;
    border-left: 1px solid #ccc;
    background-color: #f2f3f2;
    overflow: hidden;
}
.instruments svg {
    width: 15px;
    height: 15px;
    margin-left: 3px;
}
.inst-list {
    display: flex;
    flex-direction: column;
    height: 356px;
}
.inst-list button {
    flex: 1;
}
.inst-extra {
    height: 39px;
    padding-top: 5px;
    border-top: 1px solid #999;
}
.inst-extra .drop {
    width: 18px;
    height: 14px;
}
.inst-extra .drop svg {
    width: 10px;
    height: 10px;
}
.inst-extra.last {
    height: 27px;
    border-bottom: 1px solid #999;
}

/* spreadsheet view */
.spreadsheet {
    display: flex;
    height: 81px;
    border-top: 1px solid #777;
    border-bottom: 1px solid #aaa;
}
.side-title {
    width: 23px;
    padding: 2px 0 0 4px;
}
.side-title span {
    display: block;
    width: 16px;
    height: 44px;
    writing-mode: vertical-rl;
    transform: rotate(180deg);
    line-height: 16px;
    background-color: #cdd3dc;
    white-space: nowrap;
}
.results {
    flex: 1;
    min-width: 0;
}
.log {
    height: 45px;
    margin: 7px 3px 4px 0;
    padding: 2px 22px;
    background-color: #fcfcfd;
    border: 1px solid #888;
}
.log-tabs {
    display: flex;
    gap: 1px;
    border-top: 1px solid #666;
}
.log-tabs button {
    height: 17px;
    padding: 0 2px;
    border-right: 1px solid #777;
    border-bottom: 1px solid #777;
    border-left: 1px solid #aaa;
}
.log-tabs .active {
    height: 19px;
    background-color: #f6f6f6;
}

/* status bar */
.statusbar {
    display: flex;
    align-items: center;
    height: 20px;
    padding: 3px 0 0 2px;
    background-color: #f1f2f1;
}
.hint {
    flex: 1;
}
.dash-cell {
    width: 139px;
    border-right: 1px solid #ccc;
}
.blank {
    width: 182px;
}
.tran {
    width: 175px;
}
.meter-cells {
    width: 51px;
    height: 12px;
    background: repeating-linear-gradient(90deg, #bbb 0 1px, #eee 1px 8px);
    border-top: 1px solid #bbb;
}

/* taskbar */
.taskbar {
    display: flex;
    align-items: center;
    height: 27px;
    background-color: #181a19;
    color: #f0f0f0;
}
.taskbar > button {
    width: 35px;
    height: 27px;
}
.taskbar svg {
    width: 15px;
    height: 15px;
}
.taskbar .open {
    background: linear-gradient(#76b9ed, #76b9ed) center bottom / 27px 2px no-repeat;
}
.taskbar .current {
    background-color: #4c5056;
}
.tray {
    display: flex;
    align-items: center;
    gap: 8px;
    margin-left: auto;
    padding-right: 17px;
}
.lang {
    margin-left: 3px;
}
.clock {
    margin: 0 7px 0 4px;
}
```
